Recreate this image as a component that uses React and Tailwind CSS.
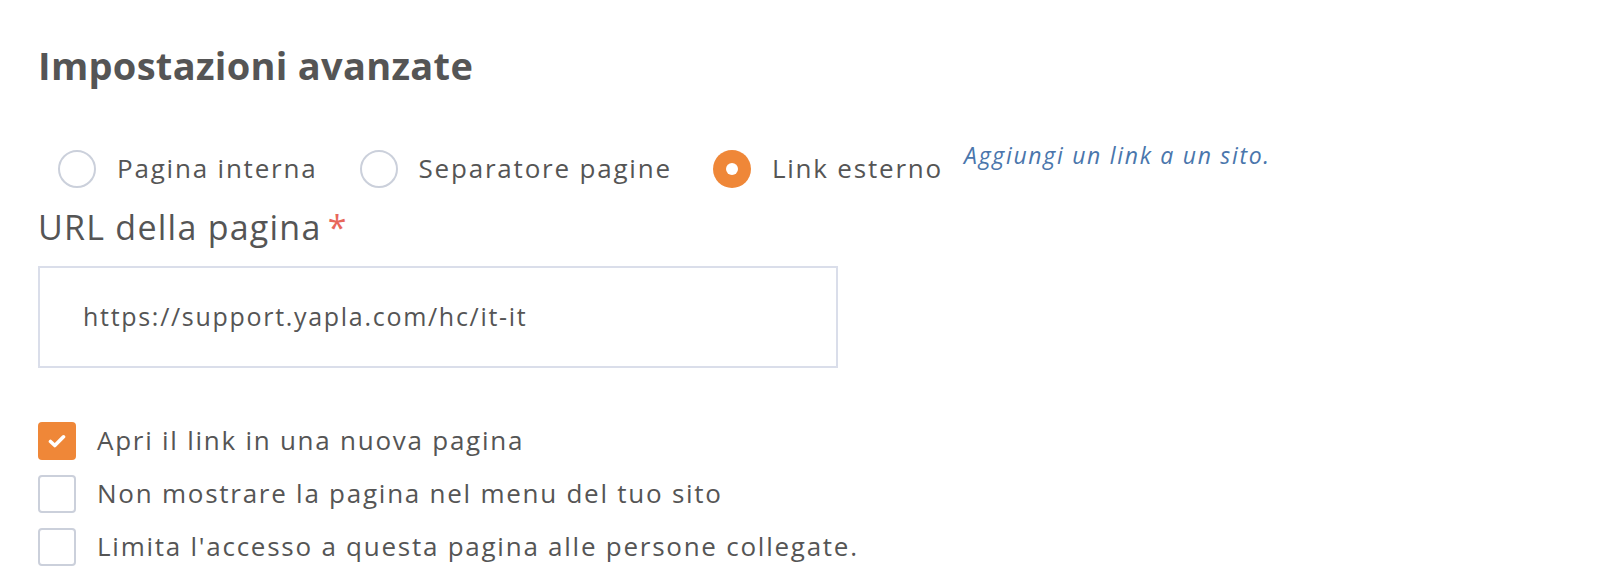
import React, { useState } from "react";

const font = { fontFamily: "'Open Sans', 'Noto Sans', sans-serif" };

const Radio = ({ label, checked, onClick }) => (
  <button type="button" onClick={onClick} className="flex items-center gap-[21px]">
    {checked ? (
      <span className="flex h-[38px] w-[38px] items-center justify-center rounded-full bg-[#ef8738]">
        <span className="h-[12px] w-[12px] rounded-full bg-white" />
      </span>
    ) : (
      <span className="h-[38px] w-[38px] rounded-full border-2 border-[#cbd0db] bg-white" />
    )}
    <span className="text-[26px] leading-[39px] tracking-[1.8px] text-[#555555]">{label}</span>
  </button>
);

const Check = ({ label, checked, onClick }) => (
  <button type="button" onClick={onClick} className="flex items-center gap-[21px]">
    {checked ? (
      <span className="flex h-[38px] w-[38px] items-center justify-center rounded-[4px] bg-[#ef8738]">
        <svg width="18" height="14" viewBox="0 0 18 14">
          <path d="M2.5 7.5 L6.8 11.5 L15.5 2.8" fill="none" stroke="white" strokeWidth="3.6" strokeLinecap="round" strokeLinejoin="round" />
        </svg>
      </span>
    ) : (
      <span className="h-[38px] w-[38px] rounded-[4px] border-2 border-[#cbd0db] bg-white" />
    )}
    <span className="text-[26px] leading-[39px] tracking-[1.75px] text-[#555555]">{label}</span>
  </button>
);

export default function App() {
  const [type, setType] = useState("external");
  const [opts, setOpts] = useState({ newPage: true, hide: false, restrict: false });
  const toggle = (k) => setOpts({ ...opts, [k]: !opts[k] });

  return (
    <div className="min-h-screen bg-white pl-[38px] pt-[40px]" style={font}>
      <h2 className="text-[38px] font-bold leading-[50px] tracking-[0.3px] text-[#555555]">Impostazioni avanzate</h2>

      <div className="mt-[59px] flex items-center pl-[20px]">
        <Radio label="Pagina interna" checked={type === "internal"} onClick={() => setType("internal")} />
        <div className="ml-[42px]">
          <Radio label="Separatore pagine" checked={type === "separator"} onClick={() => setType("separator")} />
        </div>
        <div className="ml-[41px]">
          <Radio label="Link esterno" checked={type === "external"} onClick={() => setType("external")} />
        </div>
        <span className="-mt-[26px] ml-[21px] text-[23px] italic tracking-[1.7px] text-[#4a76ac]">Aggiungi un link a un sito.</span>
      </div>

      <label className="mt-[19px] block text-[34px] leading-[40px] tracking-[1.25px] text-[#555555]">
        URL della pagina<span className="ml-[6px] tracking-normal text-[#e8675a]">*</span>
      </label>

      <div className="mt-[19px] flex h-[102px] w-[800px] items-center border-2 border-[#dadeea] px-[43px] text-[25px] tracking-[1.7px] text-[#555555]">
        https://support.yapla.com/hc/it-it
      </div>

      <div className="mt-[53px] flex flex-col gap-[14px]">
        <Check label="Apri il link in una nuova pagina" checked={opts.newPage} onClick={() => toggle("newPage")} />
        <Check label="Non mostrare la pagina nel menu del tuo sito" checked={opts.hide} onClick={() => toggle("hide")} />
        <Check label="Limita l'accesso a questa pagina alle persone collegate." checked={opts.restrict} onClick={() => toggle("restrict")} />
      </div>
    </div>
  );
}
